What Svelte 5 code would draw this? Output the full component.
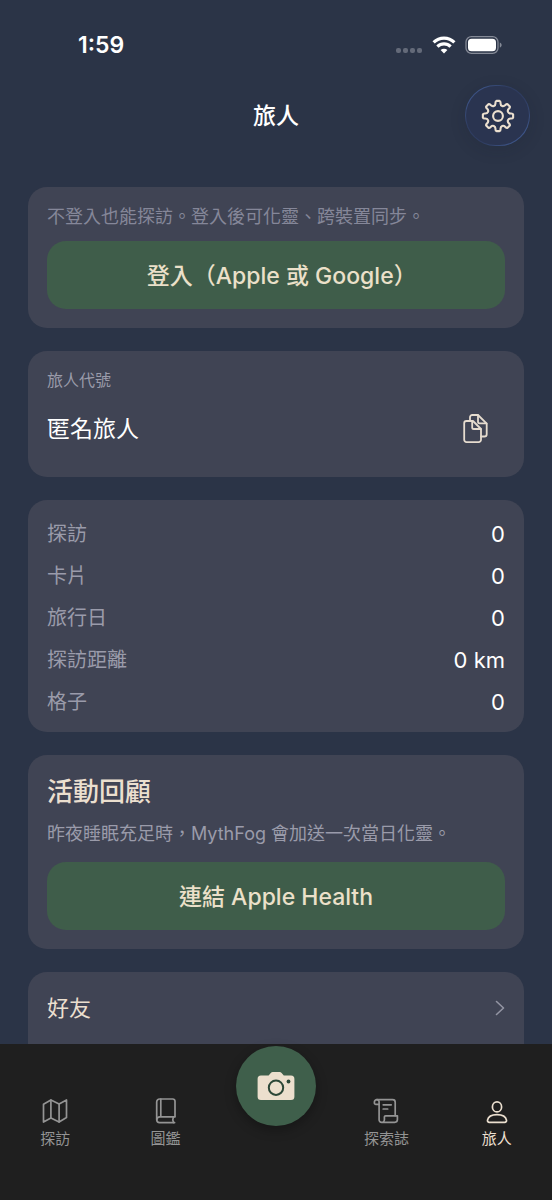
<script>
  // numbers for the stats card
  let stats = [
    { label: '探訪', value: '0' },
    { label: '卡片', value: '0' },
    { label: '旅行日', value: '0' },
    { label: '探訪距離', value: '0 km' },
    { label: '格子', value: '0' },
  ];

  let activeTab = 'traveler';

  // outline of the settings gear, eight teeth round (17, 17)
  function gearPath() {
    const at = (deg, r) => {
      const a = (deg * Math.PI) / 180;
      return `${(17 + r * Math.sin(a)).toFixed(2)} ${(17 - r * Math.cos(a)).toFixed(2)}`;
    };
    let d = '';
    for (let t = 0; t < 360; t += 45) {
      d += `${t === 0 ? 'M' : 'L'}${at(t - 6, 15.2)}`;
      d += `L${at(t + 6, 15.2)}`;
      d += `Q${at(t + 10, 15)} ${at(t + 11, 13.2)}`;
      d += `C${at(t + 14, 10.2)} ${at(t + 31, 10.2)} ${at(t + 34, 13.2)}`;
      d += `Q${at(t + 35, 15)} ${at(t + 39, 15.2)}`;
    }
    return d + 'Z';
  }
</script>

<div class="screen" lang="zh-Hant">
  <div class="status-bar">
    <span class="time">1:59</span>
    <div class="status-icons">
      <svg class="dots" width="27" height="18" viewBox="0 0 27 18" fill="#646a79">
        <rect x="0" y="12" width="5" height="5" rx="2" />
        <rect x="7" y="12" width="5" height="5" rx="2" />
        <rect x="14" y="12" width="5" height="5" rx="2" />
        <rect x="21" y="12" width="5" height="5" rx="2" />
      </svg>
      <svg width="24" height="18" viewBox="0 0 24 18" fill="none" stroke="#fff" stroke-width="3.2">
        <path d="M1.6 6.4a14.8 14.8 0 0 1 20.8 0" />
        <path d="M5.4 10.6a9.4 9.4 0 0 1 13.2 0" />
        <path d="M12 17.6l-3.4-3.5a4.9 4.9 0 0 1 6.8 0z" fill="#fff" stroke="none" />
      </svg>
      <svg width="38" height="18" viewBox="0 0 38 18">
        <rect x="1" y="0.7" width="32" height="16.6" rx="5.4" fill="none" stroke="#858a97" stroke-width="1.3" />
        <rect x="3" y="2.7" width="28" height="12.6" rx="3.6" fill="#fff" />
        <path d="M34.8 6.4c2.4 1 2.4 4.2 0 5.2z" fill="#858a97" />
      </svg>
    </div>
  </div>

  <header>
    <h1>旅人</h1>
    <button class="settings" aria-label="設定">
      <svg width="34" height="34" viewBox="0 0 34 34" fill="none" stroke="#ebdfcf" stroke-width="2.1" stroke-linejoin="round">
        <path d={gearPath()} />
        <circle cx="17" cy="17" r="4.9" />
      </svg>
    </button>
  </header>

  <main>
    <section class="card">
      <p class="hint dim">不登入也能探訪。登入後可化靈、跨裝置同步。</p>
      <button class="primary">登入（Apple 或 Google<span class="close">）</span></button>
    </section>

    <section class="card code">
      <p class="code-label">旅人代號</p>
      <div class="code-row">
        <span class="name">匿名旅人</span>
        <button class="copy" aria-label="複製">
          <svg width="26" height="30" viewBox="0 0 26 30" fill="none" stroke="#e6dccf" stroke-width="1.8" stroke-linejoin="round" stroke-linecap="round">
            <path d="M11 7H4.5A2.3 2.3 0 0 0 2.2 9.3v16.5A2.3 2.3 0 0 0 4.5 28.1h12.2A2.3 2.3 0 0 0 19 25.8V15z" />
            <path d="M10.2 7.2v6.2a1.6 1.6 0 0 0 1.6 1.6h7" />
            <path d="M8 6.8V3.3A2.3 2.3 0 0 1 10.3 1H16l8.7 8.6v10.6a2.3 2.3 0 0 1-2.3 2.3H19.2" />
            <path d="M16 1.2v6.6a1.6 1.6 0 0 0 1.6 1.6h6.9" />
          </svg>
        </button>
      </div>
    </section>

    <section class="card stats">
      <dl>
        {#each stats as stat}
          <div class="stat">
            <dt>{stat.label}</dt>
            <dd>{stat.value}</dd>
          </div>
        {/each}
      </dl>
    </section>

    <section class="card activity">
      <h2>活動回顧</h2>
      <p class="hint">昨夜睡眠充足時，MythFog 會加送一次當日化靈。</p>
      <button class="primary">連結 Apple Health</button>
    </section>

    <section class="card">
      <a class="link-row" href="#friends">
        <span>好友</span>
        <svg width="10" height="16" viewBox="0 0 10 16" fill="none" stroke="#9395a3" stroke-width="1.6" stroke-linecap="round" stroke-linejoin="round">
          <path d="M1.5 1.5L8.5 8l-7 6.5" />
        </svg>
      </a>
    </section>
  </main>

  <nav>
    <a href="#explore" class:active={activeTab === 'explore'}>
      <svg width="26" height="26" viewBox="0 0 26 26">
        <path d="M1.5 6.2L8.9 2l8.2 4 7.4-4v17.6l-7.4 4.4-8.2-4-7.4 4z" />
        <path d="M8.9 2v18M17.1 6v18" />
      </svg>
      <span>探訪</span>
    </a>
    <a href="#collection" class:active={activeTab === 'collection'}>
      <svg width="26" height="26" viewBox="0 0 26 26">
        <path d="M22 18.6V3.2A2.2 2.2 0 0 0 19.8 1H6.6A2.9 2.9 0 0 0 3.7 3.9v17.9A2.9 2.9 0 0 0 6.6 24.600H21.6" />
        <path d="M3.9 21.4A2.9 2.9 0 0 1 6.8 18.800H21.8M20.4 18.900c-.8 1.9-.8 3.8.2 5.6M7.8 1v17.6" />
      </svg>
      <span>圖鑑</span>
    </a>
    <button class="camera" aria-label="拍照">
      <svg width="38" height="30" viewBox="0 0 38 30">
        <path d="M4 4.5h7.6l2.2-2.6A2.6 2.6 0 0 1 15.8 1h6.8a2.6 2.6 0 0 1 2 .9l2.2 2.6H34A3.4 3.4 0 0 1 37.4 8v17.4A3.4 3.4 0 0 1 34 28.9H4A3.4 3.4 0 0 1 .6 25.4V8A3.4 3.4 0 0 1 4 4.5z" fill="#ecdfcd" />
        <circle cx="19" cy="16.7" r="7.2" fill="none" stroke="#2c4737" stroke-width="2" />
        <circle cx="31.5" cy="10.5" r="1.9" fill="#2c4737" />
      </svg>
    </button>
    <a href="#journal" class:active={activeTab === 'journal'}>
      <svg width="26" height="26" viewBox="0 0 26 26">
        <path d="M5.8 6.4H2.9A1.5 1.5 0 0 1 1.4 4.9V4.1a2.5 2.5 0 0 1 2.5-2.5H19.6A2.6 2.6 0 0 1 22.2 4.2V17.6" />
        <path d="M3.9 1.6a2.2 2.2 0 0 1 2.2 2.4V21.8a2.5 2.5 0 0 0 2.5 2.5H21.7a2.7 2.7 0 0 0 2.7-2.7V17.8H12.6a1.2 1.2 0 0 0-1.2 1.2v2.6a2.6 2.6 0 0 1-2.6 2.7" />
        <path d="M10.2 6.8h8M10.2 11h4.5" />
      </svg>
      <span>探索誌</span>
    </a>
    <a href="#traveler" class:active={activeTab === 'traveler'}>
      <svg width="26" height="26" viewBox="0 0 26 26">
        <ellipse cx="13" cy="8.9" rx="4.6" ry="5" />
        <path d="M5.3 24.3h15.4a1.8 1.8 0 0 0 1.8-2.2C21.8 18.6 18 16.7 13 16.7s-8.8 1.9-9.5 5.4a1.8 1.8 0 0 0 1.8 2.2z" />
      </svg>
      <span>旅人</span>
    </a>
  </nav>
</div>

<style>
  :global(body) { margin: 0; background: #2b3447; }
  .screen { height: 100vh; display: flex; flex-direction: column; background: #2b3447; color: #fff; font-family: Inter, "Noto Sans CJK TC", sans-serif; }
  h1, h2, p, dl, dd { margin: 0; }
  button { border: none; padding: 0; font-family: inherit; color: inherit; cursor: pointer; }
  svg { display: block; }
  a { color: inherit; text-decoration: none; }

  .status-bar { display: flex; justify-content: space-between; align-items: center; padding: 31px 49px 26px 78px; }
  .time { font-size: 23px; line-height: 28px; font-weight: 600; }
  .status-icons { display: flex; align-items: center; gap: 9px; }

  header { display: grid; grid-template-columns: 1fr auto 1fr; align-items: center; padding: 0 22px; }
  h1 { grid-column: 2; font-size: 23px; line-height: 30px; font-weight: 500; }
  .settings {
    justify-self: end; display: flex; align-items: center; justify-content: center;
    width: 65px; height: 61px; border: 1px solid transparent; border-radius: 32px;
    background: linear-gradient(#2a3450, #2a3450) padding-box, linear-gradient(135deg, #46639f, #2f3d62 35%, #2f3d62 60%, #46639f) border-box;
    box-shadow: 0 4px 16px rgba(20, 26, 40, 0.15);
  }

  main { flex: 1; min-height: 0; overflow-y: auto; scrollbar-width: none; display: flex; flex-direction: column; gap: 23px; margin-top: 41px; padding: 0 28px; }
  .card { flex: none; display: flex; flex-direction: column; gap: 13px; padding: 19px; border-radius: 19px; background: #404454; }

  .hint { font-size: 18px; line-height: 22px; color: #9a9baa; }
  .dim { color: #858799; }
  .primary { height: 68px; padding-bottom: 2px; border-radius: 19px; background: #3f5d4a; color: #ebe0c9; font-size: 23px; font-weight: 500; }
  .close { font-feature-settings: "halt"; }

  .code { gap: 10px; }
  .code-label { font-size: 16px; line-height: 20px; color: #9a9baa; }
  .code-row { display: flex; align-items: center; justify-content: space-between; }
  .name { font-size: 23px; line-height: 30px; }
  .copy { display: flex; align-items: center; justify-content: center; width: 60px; height: 58px; background: none; }

  .stats { padding: 20px 19px 16px; }
  dl { display: flex; flex-direction: column; gap: 14px; }
  .stat { display: flex; align-items: center; justify-content: space-between; line-height: 28px; }
  dt { font-size: 20px; color: #9a9baa; }
  dd { font-size: 22px; }

  h2 { font-size: 26px; line-height: 36px; font-weight: 500; color: #ebdfcf; }
  .activity .hint { margin-bottom: 4px; }

  .link-row { display: flex; align-items: center; justify-content: space-between; padding-bottom: 24px; font-size: 22px; line-height: 34px; color: #ebdfcf; }
  .link-row svg { stroke: #9395a3; }

  nav { flex: none; display: grid; grid-template-columns: repeat(5, 1fr); align-items: start; height: 156px; background: #1f1f1f; }
  nav a { display: flex; flex-direction: column; align-items: center; gap: 4px; padding-top: 54px; font-size: 15px; line-height: 22px; color: #949494; }
  nav a.active { color: #ebdfcf; }
  nav a svg { fill: none; stroke: currentColor; stroke-width: 1.7; stroke-linecap: round; stroke-linejoin: round; }
  .camera { justify-self: center; display: flex; align-items: center; justify-content: center; width: 80px; height: 80px; margin-top: 2px; border-radius: 50%; background: #3f5f4b; box-shadow: 0 4px 12px rgba(0, 0, 0, 0.3); }
</style>
